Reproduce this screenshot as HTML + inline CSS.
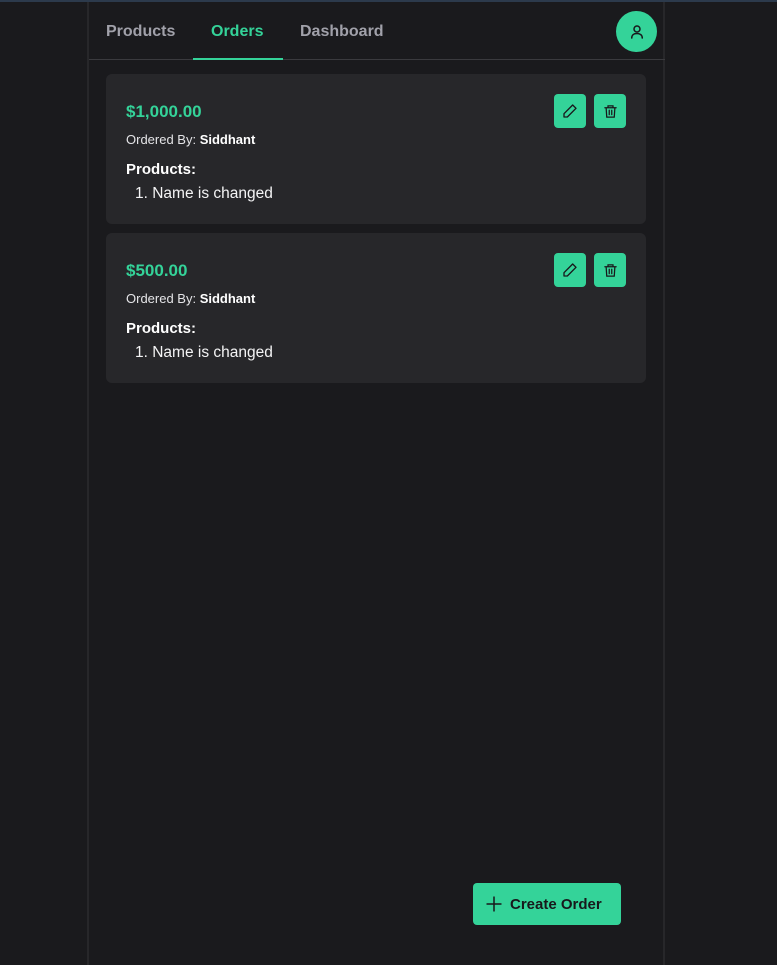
<!DOCTYPE html>
<html><head><meta charset="utf-8"><style>
*{box-sizing:border-box;margin:0;padding:0}
body{width:777px;height:965px;background:#1a1a1d;font-family:"Liberation Sans",sans-serif;position:relative;overflow:hidden;color:#fff}
.topbar{position:absolute;top:0;left:0;width:777px;height:2px;background:#2c3a4c}
.wrap{position:absolute;left:87px;top:2px;width:578px;height:963px;border-left:2px solid #27272a;border-right:2px solid #27272a}
.nav{position:absolute;left:0;top:0;width:576px;height:58px;border-bottom:1px solid #3a3a3e}
.tab{position:absolute;top:21px;font-size:16px;font-weight:bold;color:#a1a1aa}
.ul{position:absolute;left:104px;top:56px;width:90px;height:2px;background:#34d399}
.avatar{position:absolute;left:527px;top:9px;width:41px;height:41px;border-radius:50%;background:#34d399;display:flex;align-items:center;justify-content:center}
.card{position:absolute;left:17px;width:540px;height:150px;background:#27272a;border-radius:6px}
.price{position:absolute;left:20px;top:28px;font-size:17px;font-weight:bold;color:#34d399}
.by{position:absolute;left:20px;top:58px;font-size:13px;color:#e4e4e7}
.by b{color:#fff}
.ph{position:absolute;left:20px;top:87px;font-size:15px;font-weight:bold}
.li{position:absolute;left:29px;top:111px;font-size:15.5px;color:#f4f4f5}
.btn{position:absolute;top:20px;width:32px;height:34px;border-radius:4px;background:#34d399;display:flex;align-items:center;justify-content:center}
.create{position:absolute;left:473px;top:883px;width:148px;height:42px;border-radius:4px;background:#34d399;color:#18181b;font-size:15px;font-weight:bold;display:flex;align-items:center;padding-left:12px}
</style></head><body>
<div class="topbar"></div>
<div class="wrap">
 <div class="nav">
  <div class="tab" style="left:17px">Products</div>
  <div class="tab" style="left:122px;color:#34d399">Orders</div>
  <div class="tab" style="left:211px">Dashboard</div>
  <div class="ul"></div>
  <div class="avatar"><svg width="18" height="18" viewBox="0 0 24 24" fill="none" stroke="#18181b" stroke-width="2" stroke-linecap="round"><circle cx="12" cy="8" r="4"/><path d="M5 20c0-4 3-6 7-6s7 2 7 6"/></svg></div>
 </div>
 <div class="card" style="top:72px">
  <div class="price">$1,000.00</div>
  <div class="by">Ordered By: <b>Siddhant</b></div>
  <div class="ph">Products:</div>
  <div class="li">1. Name is changed</div>
  <div class="btn" style="left:448px"><svg width="16" height="16" viewBox="0 0 24 24" fill="none" stroke="#18181b" stroke-width="2" stroke-linejoin="round"><path d="M16 3l5 5L8 21H3v-5z"/></svg></div>
  <div class="btn" style="left:488px"><svg width="15" height="15" viewBox="0 0 24 24" fill="none" stroke="#18181b" stroke-width="2" stroke-linecap="round"><path d="M3 6h18M8 6V3h8v3M5 6l1 15h12l1-15M10 10v7M14 10v7"/></svg></div>
 </div>
 <div class="card" style="top:231px">
  <div class="price">$500.00</div>
  <div class="by">Ordered By: <b>Siddhant</b></div>
  <div class="ph">Products:</div>
  <div class="li">1. Name is changed</div>
  <div class="btn" style="left:448px"><svg width="16" height="16" viewBox="0 0 24 24" fill="none" stroke="#18181b" stroke-width="2" stroke-linejoin="round"><path d="M16 3l5 5L8 21H3v-5z"/></svg></div>
  <div class="btn" style="left:488px"><svg width="15" height="15" viewBox="0 0 24 24" fill="none" stroke="#18181b" stroke-width="2" stroke-linecap="round"><path d="M3 6h18M8 6V3h8v3M5 6l1 15h12l1-15M10 10v7M14 10v7"/></svg></div>
 </div>
</div>
<div class="create"><svg width="18" height="18" viewBox="0 0 24 24" stroke="#18181b" stroke-width="2"><path d="M12 2v20M2 12h20"/></svg><span style="margin-left:7px">Create Order</span></div>
</body></html>
